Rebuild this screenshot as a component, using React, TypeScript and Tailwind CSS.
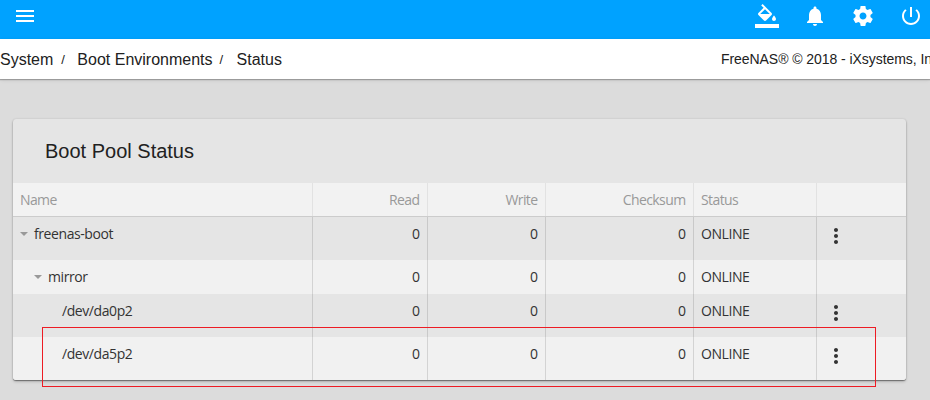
import type { ReactNode } from "react";

const icons = {
  menu: "M3 18h18v-2H3v2zm0-5h18v-2H3v2zm0-7v2h18V6H3z",
  fill: "M16.56 8.94L7.62 0 6.21 1.41l2.38 2.38-5.15 5.15c-.59.59-.59 1.54 0 2.12l5.5 5.5c.29.29.68.44 1.06.44s.77-.15 1.06-.44l5.5-5.5c.59-.58.59-1.53 0-2.12zM5.21 10L10 5.21 14.79 10H5.21zM19 11.5s-2 2.17-2 3.5c0 1.1.9 2 2 2s2-.9 2-2c0-1.33-2-3.5-2-3.5zM0 20h24v4H0z",
  bell: "M12 22c1.1 0 2-.9 2-2h-4c0 1.1.89 2 2 2zm6-6v-5c0-3.07-1.64-5.64-4.5-6.32V4c0-.83-.67-1.5-1.5-1.5s-1.5.67-1.5 1.5v.68C7.63 5.36 6 7.92 6 11v5l-2 2v1h16v-1l-2-2z",
  gear: "M19.43 12.98c.04-.32.07-.64.07-.98s-.03-.66-.07-.98l2.11-1.65c.19-.15.24-.42.12-.64l-2-3.46c-.12-.22-.39-.3-.61-.22l-2.49 1c-.52-.4-1.08-.73-1.69-.98l-.38-2.65C14.46 2.18 14.25 2 14 2h-4c-.25 0-.46.18-.49.42l-.38 2.65c-.61.25-1.17.59-1.69.98l-2.49-1c-.23-.09-.49 0-.61.22l-2 3.46c-.13.22-.07.49.12.64l2.11 1.65c-.04.32-.07.65-.07.98s.03.66.07.98l-2.11 1.65c-.19.15-.24.42-.12.64l2 3.46c.12.22.39.3.61.22l2.49-1c.52.4 1.08.73 1.69.98l.38 2.65c.03.24.24.42.49.42h4c.25 0 .46-.18.49-.42l.38-2.65c.61-.25 1.17-.59 1.69-.98l2.49 1c.23.09.49 0 .61-.22l2-3.46c.12-.22.07-.49-.12-.64l-2.11-1.65zM12 15.5c-1.93 0-3.5-1.57-3.5-3.5s1.57-3.5 3.5-3.5 3.5 1.57 3.5 3.5-1.57 3.5-3.5 3.5z",
  power: "M13 3h-2v10h2V3zm4.83 2.17l-1.42 1.42C17.99 7.86 19 9.81 19 12c0 3.87-3.13 7-7 7s-7-3.13-7-7c0-2.19 1.01-4.14 2.58-5.42L6.17 5.17C4.23 6.82 3 9.26 3 12c0 4.97 4.03 9 9 9s9-4.03 9-9c0-2.74-1.23-5.18-3.17-6.83z",
  more: "M12 8c1.1 0 2-.9 2-2s-.9-2-2-2-2 .9-2 2 .9 2 2 2zm0 2c-1.1 0-2 .9-2 2s.9 2 2 2 2-.9 2-2-.9-2-2-2zm0 6c-1.1 0-2 .9-2 2s.9 2 2 2 2-.9 2-2-.9-2-2-2z",
};

function Icon({ name }: { name: keyof typeof icons }) {
  return (
    <svg viewBox="0 0 24 24" className="block size-6 shrink-0 fill-current">
      <path d={icons[name]} />
    </svg>
  );
}

const columns = "grid grid-cols-[300px_115px_118px_148px_123px_89px]";

function Cell({ right, light, children }: { right?: boolean; light?: boolean; children?: ReactNode }) {
  return (
    <div
      className={`border-r pt-[7px] pl-[7px] ${light ? "border-[#e2e2e2]" : "border-black/12"} ${right ? "pr-[7.5px] text-right" : "pr-[7px]"}`}
    >
      {children}
    </div>
  );
}

const rows = [
  { name: "freenas-boot", indent: "pl-0", open: true, menu: true },
  { name: "mirror", indent: "pl-[14px]", open: true, menu: false },
  { name: "/dev/da0p2", indent: "pl-[42px]", open: false, menu: true },
  { name: "/dev/da5p2", indent: "pl-[42px]", open: false, menu: true },
];

export default function App() {
  return (
    <div className="relative h-[400px] w-[930px] overflow-hidden bg-[#dcdcdc] font-['Liberation_Sans',Arial,sans-serif] text-[#212121]">
      <header className="flex h-[39px] items-start justify-between bg-[#00a2ff] pt-1 pr-[7px] pl-[13px] text-white">
        <Icon name="menu" />
        <div className="flex gap-6">
          <Icon name="fill" />
          <Icon name="bell" />
          <Icon name="gear" />
          <Icon name="power" />
        </div>
      </header>
      <nav className="flex h-10 items-center overflow-hidden bg-white pt-px text-base whitespace-nowrap shadow-[0_1px_1px_rgba(0,0,0,0.25),0_1px_4px_rgba(0,0,0,0.1)]">
        <span>System</span>
        <span className="w-6 pl-2 text-[13px]">/</span>
        <span>Boot Environments</span>
        <span className="w-6 pl-[7px] text-[13px]">/</span>
        <span>Status</span>
        <span className="ml-auto w-[209px] shrink-0 pb-0.5 text-sm tracking-[-0.06px]">FreeNAS® © 2018 - iXsystems, In</span>
      </nav>
      <main className="pt-10 pl-[13px]">
        <section className="w-[893px] overflow-hidden rounded-[3px] bg-[#e5e5e5] shadow-[0_1px_1px_rgba(0,0,0,0.4),0_2px_3px_rgba(0,0,0,0.16),0_0_2px_rgba(0,0,0,0.15)]">
          <h1 className="flex h-16 items-center pl-8 text-xl">Boot Pool Status</h1>
          <div className="font-['Open_Sans','Noto_Sans',sans-serif] text-sm leading-5 text-[#333]">
            <div className={`${columns} h-[34px] border-b border-[#cccccc] bg-[#f2f2f2] tracking-[-0.6px] text-[#999]`}>
              <Cell light>Name</Cell>
              <Cell right light>Read</Cell>
              <Cell right light>Write</Cell>
              <Cell right light>Checksum</Cell>
              <Cell light>Status</Cell>
            </div>
            {rows.map((row) => (
              <div
                key={row.name}
                className={`${columns} tracking-[-0.42px] odd:bg-[#f1f1f1] even:bg-[#e5e5e5] ${row.menu ? "h-[43px]" : "h-[34px]"}`}
              >
                <Cell>
                  <div className={`flex items-center ${row.indent}`}>
                    {row.open && (
                      <svg viewBox="0 0 8 4" className="mr-[6px] h-1 w-2 fill-[#999]">
                        <path d="M0 0h8L4 4z" />
                      </svg>
                    )}
                    {row.name}
                  </div>
                </Cell>
                <Cell right>0</Cell>
                <Cell right>0</Cell>
                <Cell right>0</Cell>
                <Cell>ONLINE</Cell>
                <div className="pt-[7px] pl-[7px]">{row.menu && <Icon name="more" />}</div>
              </div>
            ))}
          </div>
        </section>
      </main>
      <div className="absolute top-[327px] left-[42px] h-[60px] w-[834px] border border-[#ed1c24]" />
    </div>
  );
}
